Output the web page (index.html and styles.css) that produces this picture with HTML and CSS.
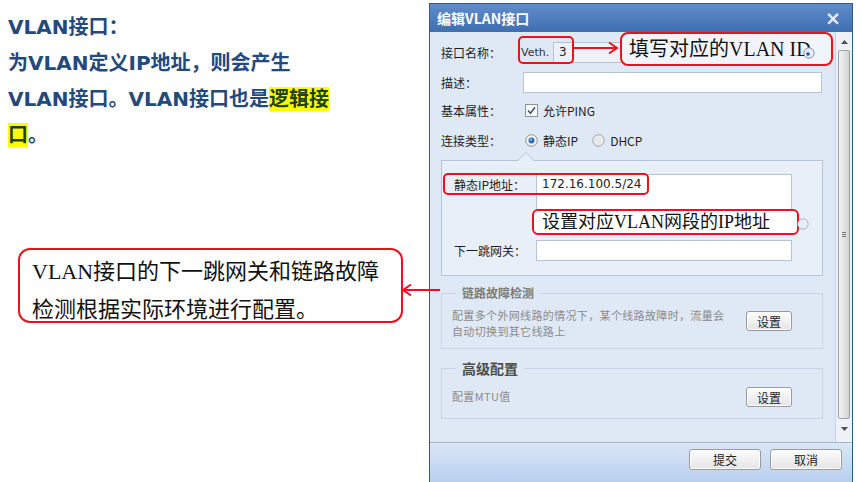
FILE: index.html
```html
<!DOCTYPE html>
<html lang="zh-CN">
<head>
    <meta charset="UTF-8">
    <title>编辑VLAN接口</title>
    <link rel="stylesheet" href="styles.css">
</head>
<body>
<div class="page">
    <!-- Explanation text on the left -->
    <div class="intro">
        <p class="lead">VLAN接口：<br>为VLAN定义IP地址，则会产生<br>VLAN接口。VLAN接口也是<mark>逻辑接</mark><br><mark>口</mark>。</p>
        <div class="note">VLAN接口的下一跳网关和链路故障<br>检测根据实际环境进行配置。</div>
    </div>

    <!-- Dialog -->
    <div class="dialog">
        <div class="dlg-title">
            <span>编辑VLAN接口</span>
            <span class="close">×</span>
        </div>
        <div class="dlg-body">
            <div class="dlg-content">
                <div class="row row-name">
                    <span class="label">接口名称：</span>
                    <div class="field">
                        <span class="prefix">Veth.</span>
                        <span class="input input-grey">3</span>
                    </div>
                </div>
                <div class="row row-desc">
                    <span class="label">描述：</span>
                    <span class="input"></span>
                </div>
                <div class="row row-basic">
                    <span class="label">基本属性：</span>
                    <span class="opt">
                        <svg width="13" height="13" viewBox="0 0 13 13"><rect x="0.5" y="0.5" width="12" height="12" fill="#fbfbfb" stroke="#8f9296"/><path d="M3 6.5 L5.5 9.2 L10 3.3" fill="none" stroke="#3d5478" stroke-width="1.6"/></svg>
                        允许PING
                    </span>
                </div>
                <div class="row row-type">
                    <span class="label">连接类型：</span>
                    <span class="opts">
                        <span class="opt">
                            <svg width="13" height="13" viewBox="0 0 13 13"><circle cx="6.5" cy="6.5" r="5.8" fill="#f3f3f3" stroke="#8c9094"/><circle cx="6.5" cy="6.5" r="3" fill="#2f6fb3"/><circle cx="5.8" cy="5.7" r="1.1" fill="#8fc0ec"/></svg>
                            静态IP
                        </span>
                        <span class="opt opt-dhcp">
                            <svg width="13" height="13" viewBox="0 0 13 13"><circle cx="6.5" cy="6.5" r="5.8" fill="#e9e9e9" stroke="#a2a5a8"/></svg>
                            DHCP
                        </span>
                    </span>
                </div>

                <div class="panel">
                    <div class="prow">
                        <span class="label plabel">静态IP地址：</span>
                        <span class="input input-tall">172.16.100.5/24</span>
                    </div>
                    <div class="prow prow-gw">
                        <span class="label">下一跳网关：</span>
                        <span class="input"></span>
                    </div>
                </div>

                <fieldset class="group">
                    <legend>链路故障检测</legend>
                    <div class="group-row">
                        <span class="group-text">配置多个外网线路的情况下，某个线路故障时，流量会<br>自动切换到其它线路上</span>
                        <button class="btn set">设置</button>
                    </div>
                </fieldset>

                <fieldset class="group group-adv">
                    <legend>高级配置</legend>
                    <div class="group-row">
                        <span class="group-text">配置MTU值</span>
                        <button class="btn set">设置</button>
                    </div>
                </fieldset>
            </div>
            <div class="scrollbar">
                <svg width="7" height="4" viewBox="0 0 7 4"><path d="M0 4 L3.5 0 L7 4 Z" fill="#4d4f52"/></svg>
                <div class="thumb"><span class="grip"></span></div>
                <svg width="7" height="4" viewBox="0 0 7 4"><path d="M0 0 L3.5 4 L7 0 Z" fill="#4d4f52"/></svg>
            </div>
        </div>
        <div class="dlg-foot">
            <button class="btn">提交</button>
            <button class="btn">取消</button>
        </div>
    </div>

    <!-- Annotations drawn over the dialog -->
    <div class="mark mark-veth"></div>
    <svg class="arrow arrow-right" width="48" height="14" viewBox="0 0 48 14"><path d="M0 7 H44 M36 1.5 L44 7 L36 12.5" fill="none" stroke="#e8131b" stroke-width="2"/></svg>
    <div class="tip tip-id">填写对应的VLAN ID</div>
    <svg class="help help-id" width="12" height="12" viewBox="0 0 12 12"><circle cx="6" cy="6" r="5.2" fill="#e6edf6" stroke="#8798ae"/><circle cx="5" cy="7" r="1.8" fill="#27548f"/></svg>

    <div class="mark mark-ip"></div>
    <div class="tip tip-ip">设置对应VLAN网段的IP地址</div>
    <svg class="help help-ip" width="12" height="12" viewBox="0 0 12 12"><circle cx="6" cy="6" r="5.2" fill="#e6edf6" stroke="#a8b6c8"/></svg>

    <svg class="arrow arrow-left" width="40" height="14" viewBox="0 0 40 14"><path d="M3 7 H40 M11 1.5 L3 7 L11 12.5" fill="none" stroke="#e8131b" stroke-width="2"/></svg>
</div>
</body>
</html>
```

FILE: styles.css
```css
* {
    box-sizing: border-box;
}

body {
    margin: 0;
    background: #fff;
}

.page {
    position: relative;
    display: flex;
    width: 861px;
    height: 482px;
    overflow: hidden;
    font-family: "Noto Sans CJK SC", sans-serif;
}

/* Left text */
.intro {
    width: 429px;
    padding: 9px 0 0 8px;
}
.lead {
    margin: 0;
    font-family: "DejaVu Sans", "Noto Sans CJK SC", sans-serif;
    font-weight: bold;
    font-size: 20px;
    line-height: 36px;
    color: #24497c;
}
.lead mark {
    background: #ffff00;
    color: #21401c;
}
.note {
    margin: 95px 0 0 10px;
    width: 385px;
    height: 75px;
    padding: 3px 0 0 12px;
    border: 2px solid #e8131b;
    border-radius: 12px;
    font-family: "Liberation Serif", "Noto Sans CJK SC", serif;
    font-size: 22px;
    line-height: 38px;
    color: #111;
}

/* Dialog */
.dialog {
    display: flex;
    flex-direction: column;
    width: 424px;
    height: 479px;
    margin-top: 3px;
    border: 1px solid #34588e;
    border-bottom: 0;
    background: #dfe8f5;
}
.dlg-title {
    display: flex;
    justify-content: space-between;
    align-items: center;
    height: 28px;
    padding: 0 11px 0 7px;
    background: linear-gradient(#5f8dca, #3f6eb1);
    color: #fff;
    font-weight: bold;
    font-size: 14px;
}
.close {
    font-size: 19px;
    font-family: "DejaVu Sans", sans-serif;
    color: #e4ebf5;
}
.dlg-body {
    display: flex;
    flex: 1;
    min-height: 0;
}
.dlg-content {
    flex: 1;
    padding: 10px 13px 0 11px;
    font-size: 12px;
    color: #1e1e1e;
}

.row {
    display: grid;
    grid-template-columns: 82px 1fr;
    align-items: center;
    height: 21px;
}
.row-desc {
    margin-top: 9px;
}
.row-basic {
    margin-top: 7px;
    height: 20px;
}
.row-type {
    margin-top: 10px;
    height: 20px;
}
.label {
    white-space: nowrap;
}
.field {
    display: flex;
    align-items: center;
}
.prefix {
    width: 32px;
    margin-left: -2px;
    font-family: "DejaVu Sans", sans-serif;
    font-size: 11px;
    color: #333;
}
.input {
    display: block;
    height: 21px;
    padding-left: 5px;
    background: #fff;
    border: 1px solid #b5c3d6;
    line-height: 19px;
    font-family: "DejaVu Sans", sans-serif;
    font-size: 12px;
    color: #222;
}
.field .input {
    flex: 1;
}
.input-grey {
    background: #eef2f8;
}
.opts {
    display: flex;
}
.opt {
    display: inline-flex;
    align-items: center;
    gap: 5px;
    margin-left: 2px;
}
.opt-dhcp {
    margin-left: 14px;
}

/* Static IP panel */
.panel {
    position: relative;
    height: 116px;
    margin: 10px -1px 0 0;
    padding: 13px 30px 0 12px;
    background: #e9eff9;
    border: 1px solid #b3c4dc;
}
.panel::before {
    content: "";
    position: absolute;
    left: 75px;
    top: -9px;
    border: 9px solid transparent;
    border-top: 0;
    border-bottom-color: #b3c4dc;
}
.panel::after {
    content: "";
    position: absolute;
    left: 76px;
    top: -8px;
    border: 8px solid transparent;
    border-top: 0;
    border-bottom-color: #e9eff9;
}
.prow {
    display: grid;
    grid-template-columns: 82px 1fr;
    align-items: center;
}
.plabel {
    align-self: start;
    line-height: 21px;
}
.input-tall {
    height: 58px;
}
.prow-gw {
    margin-top: 8px;
}

/* Groups */
.group {
    margin: 9px -1px 0 0;
    padding: 6px 30px 9px 10px;
    border: 1px solid #c6d4e7;
    min-width: 0;
}
.group legend {
    margin-left: 4px;
    padding: 0 6px;
    font-size: 12px;
    line-height: 16px;
    font-weight: bold;
    color: #7c7c7c;
}
.group-adv {
    margin-top: 10px;
    padding: 10px 30px 11px 10px;
}
.group-adv legend {
    font-size: 14px;
    line-height: 18px;
    color: #4d4d4d;
}
.group-row {
    display: flex;
    justify-content: space-between;
    align-items: flex-start;
}
.group-text {
    font-size: 11px;
    line-height: 16px;
    color: #8b8b8b;
    letter-spacing: 0.35px;
}
.group-adv .group-text {
    margin-top: 1px;
}

.btn {
    width: 72px;
    height: 21px;
    padding: 0;
    font-family: "Noto Sans CJK SC", sans-serif;
    font-size: 12px;
    color: #222;
    background: linear-gradient(#fdfdfd, #e4e4e4);
    border: 1px solid #9a9a9a;
    border-radius: 3px;
    box-shadow: inset 0 0 0 1px #fff;
}
.set {
    width: 46px;
    height: 20px;
}
.group:first-of-type .set {
    margin-top: 4px;
}

/* Scrollbar */
.scrollbar {
    display: flex;
    flex-direction: column;
    align-items: center;
    width: 17px;
    padding: 8px 0 11px;
    background: #eef1f5;
    border-left: 1px solid #c9d2de;
}
.thumb {
    position: relative;
    flex: 1;
    width: 12px;
    margin: 6px 0 8px;
    background: linear-gradient(90deg, #f4f4f4, #d2d2d2);
    border: 1px solid #98a2b0;
    border-radius: 2px;
}
.grip {
    position: absolute;
    left: 3px;
    top: 50%;
    width: 4px;
    height: 5px;
    margin-top: -3px;
    border-top: 1px solid #777;
    border-bottom: 1px solid #777;
}
.grip::after {
    content: "";
    position: absolute;
    left: 0;
    top: 1px;
    width: 4px;
    border-top: 1px solid #777;
}

.dlg-foot {
    display: flex;
    justify-content: flex-end;
    gap: 9px;
    height: 40px;
    padding: 6px 10px 0 0;
    background: linear-gradient(#dce7f6, #b8cff0);
    border-top: 1px solid #a5b6cc;
}

/* Red annotations */
.mark,
.tip,
.arrow,
.help {
    position: absolute;
}
.mark {
    border: 2px solid #e8131b;
    border-radius: 5px;
}
.mark-veth {
    left: 518px;
    top: 36px;
    width: 56px;
    height: 28px;
}
.mark-ip {
    left: 443px;
    top: 173px;
    width: 206px;
    height: 22px;
}
.arrow-right {
    left: 573px;
    top: 41px;
}
.arrow-left {
    left: 400px;
    top: 283px;
}
.tip {
    border: 2px solid #e8131b;
    border-radius: 8px;
    font-family: "Liberation Serif", "Noto Sans CJK SC", serif;
    color: #111;
    white-space: nowrap;
}
.tip-id {
    left: 620px;
    top: 32px;
    width: 213px;
    height: 34px;
    padding-left: 7px;
    background: #f1f5fb;
    font-size: 20px;
    line-height: 30px;
}
.tip-ip {
    left: 532px;
    top: 209px;
    width: 267px;
    height: 26px;
    padding-left: 8px;
    background: #fff;
    border-radius: 6px;
    font-size: 18px;
    line-height: 22px;
}
.help-id {
    left: 803px;
    top: 47px;
}
.help-ip {
    left: 797px;
    top: 218px;
}
```
